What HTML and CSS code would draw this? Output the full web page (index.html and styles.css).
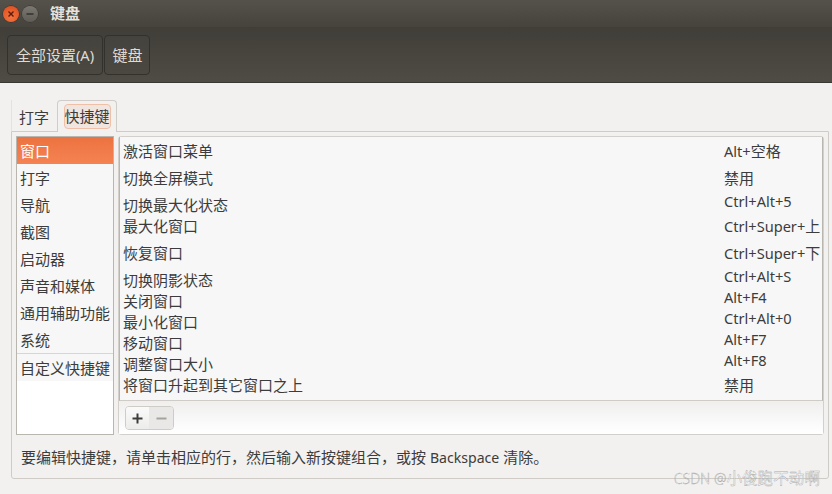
FILE: index.html
```html
<!DOCTYPE html>
<html lang="zh-CN">
<head>
<meta charset="utf-8">
<title>键盘</title>
<link rel="stylesheet" href="styles.css">
</head>
<body>
<div class="window">
  <header class="titlebar">
    <div class="controls">
      <span class="ctl close"><svg width="10" height="10" viewBox="0 0 10 10"><path d="M2.5 2.5l5 5M7.5 2.5l-5 5" stroke="#5a1c08" stroke-width="1.4" fill="none"/></svg></span>
      <span class="ctl min"><svg width="10" height="10" viewBox="0 0 10 10"><path d="M1.5 5h7" stroke="#2e2d29" stroke-width="1.4" fill="none"/></svg></span>
    </div>
    <div class="title">键盘</div>
  </header>
  <nav class="toolbar">
    <button class="crumb first">全部设置<span class="lat">(A)</span></button>
    <button class="crumb second">键盘</button>
  </nav>
  <main class="content">
    <div class="tabs">
      <div class="tab">打字</div>
      <div class="tab active"><span class="focus">快捷键</span></div>
    </div>
    <section class="notebook">
      <div class="panes">
        <ul class="cats">
          <li class="cat selected">窗口</li>
          <li class="cat">打字</li>
          <li class="cat">导航</li>
          <li class="cat">截图</li>
          <li class="cat">启动器</li>
          <li class="cat">声音和媒体</li>
          <li class="cat">通用辅助功能</li>
          <li class="cat">系统</li>
          <li class="cat custom">自定义快捷键</li>
        </ul>
        <div class="right">
          <div class="list">
            <div class="row"><span class="name">激活窗口菜单</span><span class="key"><span class="lat">Alt+</span>空格</span></div>
            <div class="row"><span class="name">切换全屏模式</span><span class="key">禁用</span></div>
            <div class="row short"><span class="name">切换最大化状态</span><span class="key lat">Ctrl+Alt+5</span></div>
            <div class="row"><span class="name">最大化窗口</span><span class="key"><span class="lat">Ctrl+Super+</span>上</span></div>
            <div class="row"><span class="name">恢复窗口</span><span class="key"><span class="lat">Ctrl+Super+</span>下</span></div>
            <div class="row short"><span class="name">切换阴影状态</span><span class="key lat">Ctrl+Alt+S</span></div>
            <div class="row short"><span class="name">关闭窗口</span><span class="key lat">Alt+F4</span></div>
            <div class="row short"><span class="name">最小化窗口</span><span class="key lat">Ctrl+Alt+0</span></div>
            <div class="row short"><span class="name">移动窗口</span><span class="key lat">Alt+F7</span></div>
            <div class="row short"><span class="name">调整窗口大小</span><span class="key lat">Alt+F8</span></div>
            <div class="row"><span class="name">将窗口升起到其它窗口之上</span><span class="key">禁用</span></div>
          </div>
          <div class="actions">
            <div class="btns">
              <span class="btn add"><svg width="13" height="13" viewBox="0 0 13 13"><path d="M6.5 1.5v10M1.5 6.5h10" stroke="#3c3c3c" stroke-width="2" fill="none"/></svg></span>
              <span class="btn remove"><svg width="13" height="13" viewBox="0 0 13 13"><path d="M1.5 6.5h10" stroke="#a5a3a0" stroke-width="2" fill="none"/></svg></span>
            </div>
          </div>
        </div>
      </div>
      <p class="hint">要编辑快捷键，请单击相应的行，然后输入新按键组合，或按 <span class="word">Backspace</span> 清除。</p>
    </section>
  </main>
  <div class="watermark"><span class="mark-lat">CSDN @</span>小俊跑不动啊</div>
</div>
</body>
</html>
```
FILE: styles.css
```css
* { box-sizing: border-box; }
html, body { margin: 0; padding: 0; }
body {
  width: 832px;
  height: 494px;
  overflow: hidden;
  font-family: "Noto Sans", "Noto Sans CJK SC", sans-serif;
  font-size: 15px;
  color: #3c3c3c;
  background: #f2f1f0;
}
.lat { font-size: 14.6px; }
.word { font-size: 14.1px; }
.window { position: relative; width: 832px; height: 494px; display: flex; flex-direction: column; }

.titlebar {
  height: 27px;
  display: flex;
  align-items: center;
  background: linear-gradient(#55524b, #46433d);
  padding-left: 3px;
}
.controls { display: flex; gap: 3px; width: 47px; }
.ctl {
  width: 16px;
  height: 16px;
  border-radius: 50%;
  display: flex;
  align-items: center;
  justify-content: center;
}
.close { background: radial-gradient(circle at 50% 70%, #f2743f, #dd4a1c); box-shadow: 0 0 0 .5px #3a2a22; }
.min { background: linear-gradient(#7b7871, #5f5c56); box-shadow: 0 0 0 .5px #35332e; }
.title { color: #e6e3dc; font-weight: 700; line-height: 27px; }

.toolbar {
  height: 56px;
  display: flex;
  align-items: flex-start;
  padding: 8px 0 0 7px;
  gap: 1px;
  background: linear-gradient(#403e38, #4f4c45);
  border-bottom: 1px solid #3a3833;
}
.crumb {
  height: 40px;
  padding: 0;
  font: inherit;
  line-height: 36px;
  color: #dfdbd2;
  background: linear-gradient(#45433d, #4b4842);
  border: 1px solid #33312c;
  border-radius: 4px;
}
.first { width: 96px; }
.second { width: 46px; padding-left: 1px; }

.content { flex: 1; padding: 17px 3px 15px 11px; display: flex; flex-direction: column; }
.tabs { display: flex; height: 31px; gap: 1px; }
.tab {
  width: 45px;
  display: flex;
  align-items: center;
  justify-content: center;
  padding-top: 3px;
  line-height: 24px;
  border-left: 1px solid #e4e2df;
}
.tab.active {
  width: 60px;
  border: 1px solid #d0cdc8;
  border-bottom: 0;
  border-radius: 4px 4px 0 0;
  padding-top: 0;
  margin-bottom: -1px;
  background: #f2f1f0;
  position: relative;
}
.focus {
  width: 47px;
  height: 25px;
  line-height: 23px;
  text-align: center;
  border: 1px solid #efbfa8;
  border-radius: 4px;
  background: #f1e6df;
}
.notebook {
  flex: 1;
  border: 1px solid #cfccc7;
  border-radius: 0 0 3px 3px;
  padding: 4px 4px 0 4px;
  display: flex;
  flex-direction: column;
}
.panes { display: flex; gap: 4px; height: 299px; }
.cats {
  list-style: none;
  margin: 0;
  padding: 0;
  width: 98px;
  background: #fff;
  border: 1px solid #b9b6b0;
}
.cat {
  height: 27px;
  line-height: 29px;
  padding-left: 3px;
  background: #f7f7f7;
  white-space: nowrap;
}
.cat.selected { color: #fff; background: linear-gradient(#ec7340, #f58253); }
.cat.custom { height: 28px; line-height: 29px; border-top: 1px solid #d8d6d2; }
.right {
  flex: 1;
  display: flex;
  flex-direction: column;
  border: 1px solid #d3d0cb;
  border-radius: 3px;
  background: #fff;
}
.list {
  height: 264px;
  background: #f7f7f7;
  border-left: 1px solid #b9b6b0;
  border-right: 1px solid #b9b6b0;
  border-bottom: 1px solid #cfccc7;
}
.row { display: flex; height: 27px; align-items: center; padding-left: 3px; }
.row.short { height: 21px; }
.name { width: 601px; white-space: nowrap; }
.key { white-space: nowrap; }
.short .name { padding-top: 5px; }
.short .key { padding-bottom: 1px; }
.actions {
  flex: 1;
  padding: 5px 0 0 6px;
  background: linear-gradient(#f0efee, #fff);
}
.btns {
  display: inline-flex;
  height: 24px;
  border: 1px solid #cfccc7;
  border-radius: 4px;
  overflow: hidden;
}
.btn { width: 24px; display: flex; align-items: center; justify-content: center; }
.add { background: linear-gradient(#fbfafa, #ececea); width: 23px; }
.remove { background: #e9e8e6; }
.hint { margin: 12px 0 0 5px; line-height: 20px; white-space: nowrap; }

.watermark {
  position: absolute;
  right: 12px;
  top: 469px;
  font-size: 15.6px;
  line-height: 18px;
  color: rgba(255,255,255,.6);
  -webkit-text-stroke: .4px rgba(110,110,110,.6);
  white-space: nowrap;
}
.mark-lat { font-size: 14px; font-weight: 300; }
```
